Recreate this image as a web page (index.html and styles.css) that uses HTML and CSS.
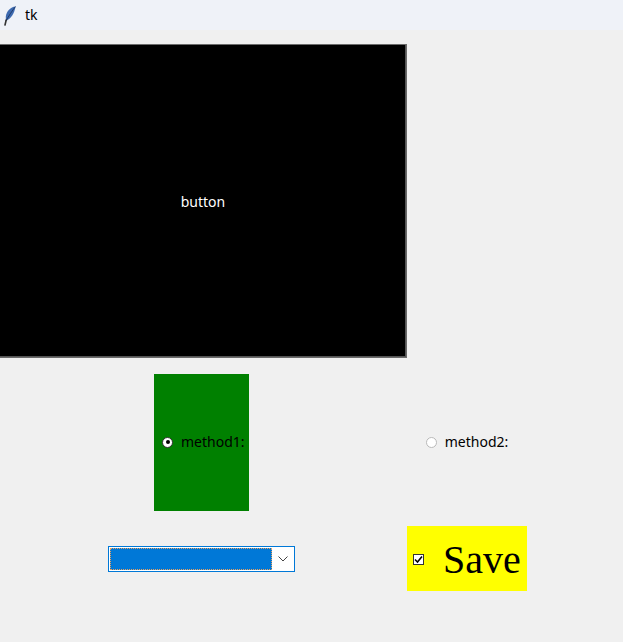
FILE: index.html
```html
<!DOCTYPE html>
<html>
<head>
<meta charset="utf-8">
<link rel="stylesheet" href="styles.css">
</head>
<body>
<div class="titlebar">
  <svg class="feather" width="13" height="20" viewBox="0 0 13 20">
    <path d="M12.5 0.5 C7.5 1 3.5 5 2.8 10.5 L2.8 15 C8 13 11.5 7 12.5 0.5 Z" fill="#3d6ab0"/>
    <path d="M12.5 0.5 C9 5 6 9.5 2.8 15" stroke="#1d3563" stroke-width="0.9" fill="none"/>
    <path d="M3.2 14 L2 19" stroke="#333" stroke-width="1.6" stroke-linecap="round"/>
  </svg>
  <span class="title">tk</span>
</div>
<div class="main">
  <div class="cell c-button"><div class="btn">button</div></div>
  <div class="cell c-empty"></div>
  <div class="cell"><div class="green"><label class="radio"><span class="dot on"></span><span class="rlabel">method1:</span></label></div></div>
  <div class="cell"><label class="radio"><span class="dot"></span><span class="rlabel">method2:</span></label></div>
  <div class="cell"><div class="combo"><div class="sel"></div><div class="arrow"><svg width="10" height="6" viewBox="0 0 10 6"><path d="M0.5 0.5 L5 5 L9.5 0.5" stroke="#444" stroke-width="1" fill="none"/></svg></div></div></div>
  <div class="cell"><div class="yellow"><span class="check"><svg width="9" height="9" viewBox="0 0 9 9"><path d="M1 4.5 L3.5 7 L8 1.5" stroke="#000" stroke-width="1.6" fill="none"/></svg></span><span class="save">Save</span></div></div>
</div>
</body>
</html>
```
FILE: styles.css
```css
html, body { margin: 0; padding: 0; }
body { background: #f0f0f0; width: 623px; height: 642px; overflow: hidden; font-family: "Noto Sans", "Open Sans", sans-serif; }
.titlebar { height: 30px; background: #eff2f8; display: flex; align-items: center; }
.feather { margin-left: 3px; margin-top: 2px; }
.title { margin-left: 9px; font-size: 14px; color: #000; font-family: "Noto Sans", sans-serif; margin-top: -1px; }
.main { display: grid; grid-template-columns: 407px 120px; grid-template-rows: 314px 168px 65px; margin-top: 14px; }
.cell { display: flex; align-items: center; justify-content: center; }
.btn { width: 407px; height: 314px; box-sizing: border-box; background: #000; border: 1px solid #6b6b6b; border-left: none; box-shadow: inset -1px -1px 0 #555; color: #fff; font-size: 14px; display: flex; align-items: center; justify-content: center; padding-bottom: 0; }
.green { width: 95px; height: 137px; background: #008000; display: flex; align-items: center; padding-left: 8px; box-sizing: border-box; margin-right: 4px; }
.radio { display: flex; align-items: center; font-size: 14px; color: #000; }
.dot { width: 11px; height: 11px; box-sizing: border-box; border-radius: 50%; border: 1px solid #b9b9b9; background: #fff; position: relative; }
.dot.on { border-color: #333; }
.dot.on::after { content: ""; position: absolute; left: 2.5px; top: 2.5px; width: 4px; height: 4px; border-radius: 50%; background: #000; }
.rlabel { margin-left: 8px; line-height: 1; margin-top: -1px; }
.combo { width: 187px; height: 26px; box-sizing: border-box; border: 1px solid #0078d7; background: #fff; display: flex; align-items: center; padding-left: 1px; margin-right: 4px; }
.sel { width: 162px; height: 22px; box-sizing: border-box; background: #0078d7; border: 1px dotted #e8a060; }
.arrow { flex: 1; display: flex; justify-content: center; align-items: center; padding-top: 1px; }
.yellow { width: 120px; height: 65px; background: #ffff00; display: flex; align-items: center; padding-left: 6px; box-sizing: border-box; }
.check { width: 11px; height: 11px; box-sizing: border-box; border: 1px solid #333; background: #fff; display: flex; align-items: center; justify-content: center; margin-top: 2px; }
.save { font-family: "Liberation Serif", serif; font-size: 40px; margin-left: 19px; line-height: 1; margin-top: 2px; }
```
